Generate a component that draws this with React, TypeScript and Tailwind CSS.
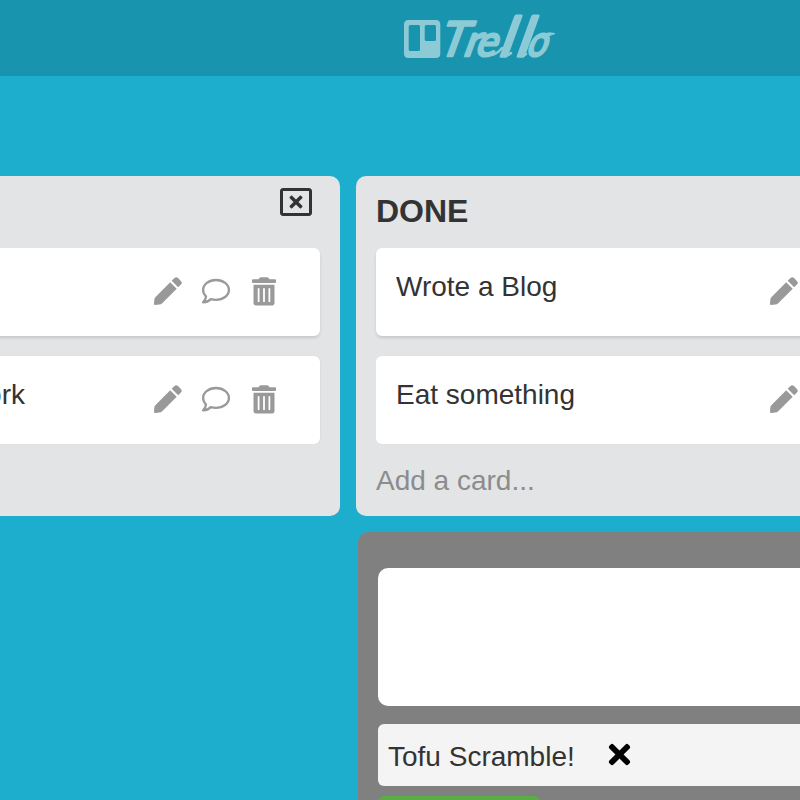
import React from "react";
import { FaRegWindowClose, FaTimes } from "react-icons/fa";

function TrelloLogo() {
  return (
    <svg width="160" height="56" viewBox="0 0 160 56" aria-label="Trello" className="block overflow-visible">
      <path
        fill="#8ccad6"
        fillRule="evenodd"
        d="M8.500 12h27.300q4.500 0 4.500 4.500v29q0 4.500-4.500 4.500H8.500q-4.500 0-4.500-4.500v-29Q4 12 8.500 12Zm1.700 5q-1.500 0-1.500 1.500v23q0 1.500 1.500 1.500h8.300q1.500 0 1.500-1.500v-23q0-1.500-1.500-1.500Zm16 0q-1.500 0-1.500 1.500v13q0 1.500 1.500 1.500h8.300q1.500 0 1.500-1.500v-13q0-1.500-1.500-1.500Z"
      />
      <g
        transform="translate(0 48) skewX(-20)"
        fill="#8ccad6"
        stroke="#8ccad6"
        strokeWidth="2.5"
        strokeLinejoin="round"
        textAnchor="middle"
        className="font-['Lato',sans-serif] font-normal"
      >
        <text fontSize="48" x="50" strokeWidth="2.500" textLength="28" lengthAdjust="spacingAndGlyphs">T</text>
        <text fontSize="44" x="70" textLength="16" lengthAdjust="spacingAndGlyphs">r</text>
        <text fontSize="43" x="84.500" textLength="21" lengthAdjust="spacingAndGlyphs">e</text>
        <text fontSize="54" x="104" strokeWidth="3.500">l</text>
        <text fontSize="54" x="121" strokeWidth="3.500">l</text>
        <text fontSize="43" x="135" textLength="20" lengthAdjust="spacingAndGlyphs">o</text>
      </g>
      <path d="M92 47q5-1 10-7M104 48q4 0 7-3M121 48q3 0 5-2" fill="none" stroke="#8ccad6" strokeWidth="2.500" strokeLinecap="round" />
      <path d="M144 26q5-2 11-.5q-4 2-10 3Z" fill="#8ccad6" stroke="#8ccad6" strokeWidth="1" strokeLinejoin="round" />
    </svg>
  );
}

function PencilIcon() {
  return (
    <svg width="28" height="28" viewBox="0 0 28 28" fill="currentColor" aria-hidden="true">
      <path d="M17.700 3.800 20.400 1.100Q22.200-.6 24 1.100L26.900 4Q28.600 5.800 26.900 7.600L24.200 10.300Z" />
      <path d="M16.200 5.300 22.700 11.800 8.200 26.300Q7 27.500 5.300 27.600L1 28Q0 28 0 27L.3 22.700Q.4 21.100 1.600 19.900Z" />
    </svg>
  );
}

function CommentIcon() {
  return (
    <svg width="28" height="28" viewBox="0 0 28 28" fill="none" stroke="currentColor" strokeWidth="2.3" strokeLinejoin="round" aria-hidden="true">
      <path d="M14 3C21 3 26.900 7.300 26.900 13C26.900 18.700 21 22.800 14 22.800Q11.200 22.800 8.800 22.100Q5.600 25.400 1.100 25.300Q3.800 22.500 4 19.600Q1.100 16.800 1.100 13C1.100 7.300 7 3 14 3Z" />
    </svg>
  );
}

function TrashIcon() {
  return (
    <svg width="24" height="29" viewBox="0 0 24 29" fill="currentColor" aria-hidden="true">
      <path d="M1 2.300H6.500L7.500.9Q8 .2 9 .2H15Q16 .2 16.500.9L17.500 2.300H23Q24 2.300 24 3.300V5Q24 6 23 6H1Q0 6 0 5V3.300Q0 2.300 1 2.300Z" />
      <path fillRule="evenodd" d="M1.500 7.700H22.500V25.700Q22.500 28.500 19.700 28.500H4.300Q1.500 28.500 1.500 25.700ZM5.700 11.800V24.300Q5.700 25.200 6.600 25.200T7.500 24.300V11.800Q7.500 10.900 6.600 10.900T5.700 11.800ZM11.100 11.800V24.300Q11.100 25.200 12 25.200T12.900 24.300V11.800Q12.900 10.900 12 10.900T11.100 11.800ZM16.500 11.800V24.300Q16.500 25.200 17.400 25.200T18.300 24.300V11.800Q18.300 10.900 17.400 10.900T16.500 11.800Z" />
    </svg>
  );
}

function Card({ title, clipped = false, last = false }: { title: string; clipped?: boolean; last?: boolean }) {
  return (
    <div className={`flex h-[88px] shrink-0 items-start rounded-md bg-white px-5 ${last ? "shadow-[1px_0_2px_rgba(0,0,0,0.04)]" : "shadow-[0_2px_3px_rgba(0,0,0,0.12)]"}`}>
      <div className={`w-[374px] shrink-0 pt-[23px] text-[28px] leading-8 ${clipped ? "pr-[129px] text-right" : ""}`}>{title}</div>
      <div className="flex items-start pt-[29px] text-[#999]">
        <PencilIcon />
        <span className="ml-5">
          <CommentIcon />
        </span>
        <span className="ml-[22px]">
          <TrashIcon />
        </span>
      </div>
    </div>
  );
}

function ListPanel({ title, cards, footer, clipped = false }: { title: string; cards: string[]; footer: string; clipped?: boolean }) {
  return (
    <section className="flex h-[340px] w-[600px] shrink-0 flex-col rounded-[10px] bg-[#e2e4e6] px-5">
      <header className="flex h-[72px] shrink-0 items-start justify-between">
        <h2 className="pt-[15px] text-[32px] leading-10 font-bold">{title}</h2>
        <FaRegWindowClose className="mt-[10px] mr-2 size-8" />
      </header>
      <div className="flex flex-col gap-5">
        {cards.map((card, i) => (
          <Card key={i} title={card} clipped={clipped} last={i === cards.length - 1} />
        ))}
      </div>
      <p className="pt-[21px] text-[28px] leading-8 text-[#8c8c8c]">{footer}</p>
    </section>
  );
}

export default function App() {
  return (
    <main className="h-[800px] w-[800px] overflow-hidden bg-[#1eaecd] font-['Liberation_Sans',Arial,sans-serif] text-[#333]">
      <header className="h-[76px] bg-[#1994af] pt-2 pl-[400px]">
        <TrelloLogo />
      </header>
      <div className="mt-[100px] -ml-[260px] flex w-[1300px] items-start gap-4">
        <ListPanel title="" cards={["", "work"]} footer="" clipped />
        <div className="shrink-0">
          <ListPanel title="DONE" cards={["Wrote a Blog", "Eat something"]} footer="Add a card..." />
          <section className="mt-4 ml-0.5 flex h-[300px] w-[600px] flex-col rounded-[10px] bg-[#808080] px-5 pt-9">
            <div className="h-[138px] shrink-0 rounded-[10px] bg-white" />
            <div className="mt-[18px] flex h-[62px] shrink-0 items-center rounded-md bg-[#f4f4f4] px-2.5">
              <span className="w-[216px] pt-[3px] text-[28px] leading-8">Tofu Scramble!</span>
              <FaTimes className="mb-px size-[31px] text-black" />
            </div>
            <div className="mt-2.5 h-14 w-[162px] shrink-0 rounded-md bg-[#5aac44]" />
          </section>
        </div>
      </div>
    </main>
  );
}
